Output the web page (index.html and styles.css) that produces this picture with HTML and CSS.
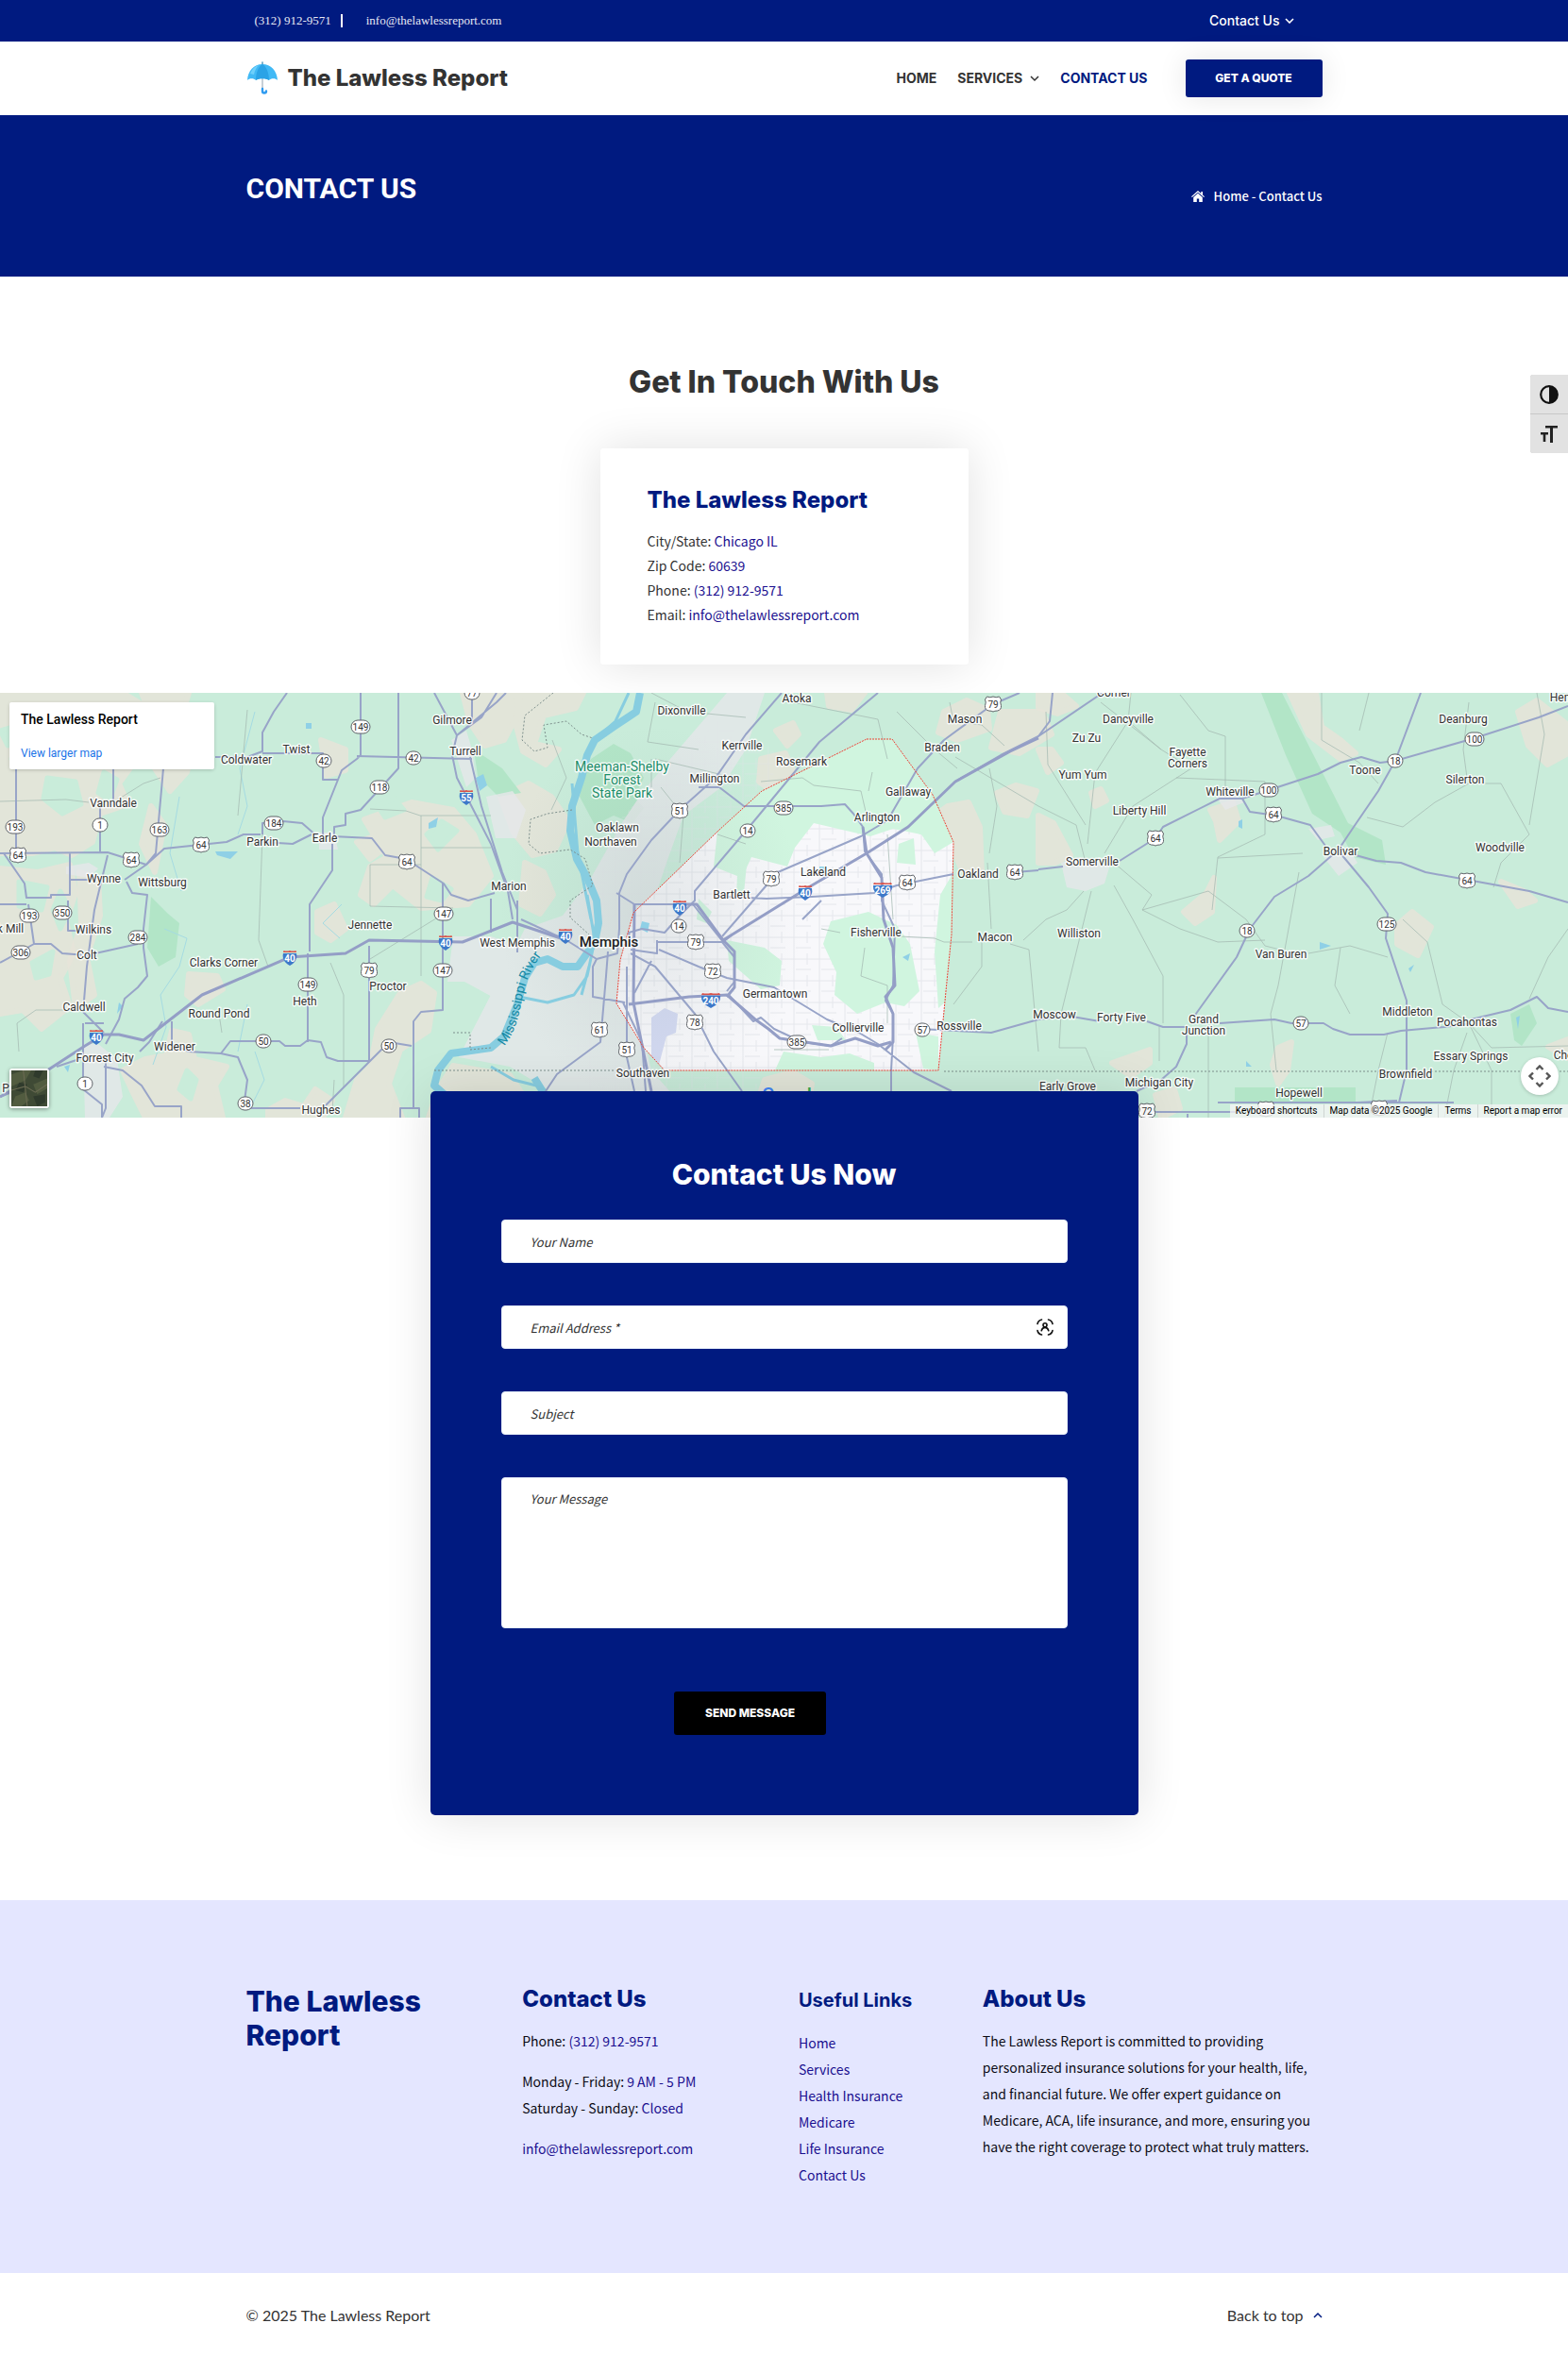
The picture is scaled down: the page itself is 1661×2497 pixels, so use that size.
FILE: index.html
```html
<!DOCTYPE html>
<html lang="en">
<head>
<meta charset="utf-8">
<meta name="viewport" content="width=device-width, initial-scale=1">
<title>Contact Us - The Lawless Report</title>
<link rel="stylesheet" href="styles.css">
</head>
<body>
<div class="topbar">
  <div class="container topbar-row">
    <div class="topbar-contact">
      <a class="topbar-phone" href="tel:3129129571">(312) 912-9571</a>
      <a href="mailto:info@thelawlessreport.com">info@thelawlessreport.com</a>
    </div>
    <button class="topbar-menu" type="button">Contact Us
      <svg width="10" height="6" viewBox="0 0 10 6" aria-hidden="true"><path d="M1 1l4 4 4-4" fill="none" stroke="currentColor" stroke-width="1.600"/></svg>
    </button>
  </div>
</div>

<header class="header">
  <div class="container header-row">
    <a class="brand" href="#">
      <svg class="brand-icon" width="34" height="36" viewBox="0 0 34 36" aria-hidden="true">
        <path d="M17 16v14" stroke="#b9c3cc" stroke-width="1.6"/>
        <path d="M17 29v2.500a2 2 0 0 0 4 0" fill="none" stroke="#2f9bf0" stroke-width="2.400" stroke-linecap="round"/>
        <path d="M17 1v3" stroke="#5d9fc0" stroke-width="1.600" stroke-linecap="round"/>
        <path d="M1 20C1.500 10 8 3 17 3s15.500 7 16 17c-2-2.500-7-2.500-9 0-3-2.500-11-2.500-14 0-2-2.500-7-2.500-9 0z" fill="#41b9f5"/>
        <path d="M10 20C10 12 13 5 17 3c4 2 7 9 7 17-3-2.500-11-2.500-14 0z" fill="#2ba3e6"/>
        <path d="M4 13C6 8 9 5 13 4c-2 2-4 5-5 10z" fill="#6fd0fb"/>
      </svg>
      <span>The Lawless Report</span>
    </a>
    <nav class="nav" aria-label="Main">
      <a href="#">HOME</a>
      <a href="#">SERVICES
        <svg width="10" height="8" viewBox="0 0 10 8" aria-hidden="true"><path d="M1 2l4 4 4-4" fill="none" stroke="currentColor" stroke-width="1.500"/></svg>
      </a>
      <a class="is-active" href="#">CONTACT US</a>
      <a class="btn btn-quote" href="#">GET A QUOTE</a>
    </nav>
  </div>
</header>

<section class="hero">
  <div class="container hero-row">
    <h1>CONTACT US</h1>
    <div class="crumbs">
      <svg width="14" height="12" viewBox="0 0 14 12" aria-hidden="true"><path d="M7 0L0 6.200l.8.900L7 1.700l6.200 5.400.8-.9-2-1.800V1h-1.700v1.900zM7 2.800L2.200 7v5h3.600V8.500h2.400V12h3.600V7z" fill="currentColor"/></svg>
      <span><a href="#">Home</a> - Contact Us</span>
    </div>
  </div>
</section>

<main>
  <section class="touch">
    <h2>Get In Touch With Us</h2>
    <div class="card">
      <h3>The Lawless Report</h3>
      <p>City/State: <span class="accent">Chicago IL</span></p>
      <p>Zip Code: <span class="accent">60639</span></p>
      <p>Phone: <a href="tel:3129129571">(312) 912-9571</a></p>
      <p>Email: <a href="mailto:info@thelawlessreport.com">info@thelawlessreport.com</a></p>
    </div>
  </section>

  <section class="map" aria-label="Map">
    <svg class="map-canvas" viewBox="0 0 1661 450" preserveAspectRatio="xMidYMid slice">
      <defs>
        <radialGradient id="focus"><stop offset="0" stop-color="#9aa" stop-opacity=".22"/><stop offset="1" stop-color="#9aa" stop-opacity="0"/></radialGradient>
        <pattern id="streets" width="27" height="23" patternUnits="userSpaceOnUse"><path d="M4 0v23M18 0v12M0 6h27M6 17h16" fill="none" stroke="#e0e2e8" stroke-width="1"/></pattern>
        <clipPath id="service"><path d="M918 49H945L988 108L1010 158L1008 256L1002 316L994 400H704L682 376L653 329L657 283L671 233L761 146L807 104Z"/></clipPath>
      </defs>
      <rect width="1661" height="450" class="land"/>

      <!-- farmland -->
      <g class="farm">
        <path d="M0 0h130l20 12-14 24 12 30-22 30 10 22-30 10-8 30-22 14-18-8-24 6-34 0z"/>
        <path d="M150 0h50l-6 20 14 24-10 40-18 20-16-24 2-40zM160 120l14 20-10 50-14-30zM0 186l40 4 34-8 6 30-10 30 8 34-14 26 10 30-30 24-20-20-24 4z"/>
        <path d="M84 190l20 6 2 40-14 44 8 40-20 14-6-50 12-40z"/>
        <path d="M130 400l24-12 22-4 6-26 18 4 6 26 34 8-12 20 8 34H154l-12-24zM200 298l30 2 6 14-26 16-12-10z"/>
        <path d="M386 134l50-18 44 8 22 26 18 44-24 30-50 4-30-24-20 20-14-10 10-30 18-10zM336 232l18-8 12 26-16 12-14-8zM340 50l26 10 0 22-20 6zM378 158l18-6 12 12-16 12zM424 318l22-10 14 10-6 40-30 20-12 36 14 36h-60l12-40 14-14 8-40zM284 442l18-10 20 6 12-18 18 12-10 18h-58z"/>
        <path d="M490 0h56l4 20-16 30-20 6-16-24zM530 110l30-14 24 14 18 26-14 30-24 6-20-24zM556 180l20 10 10 24-14 20-20-10zM552 0h66l-8 16-34 8-10 30 26 6-14 16-24-14-8-30zM480 395l60 10 20 30-20 15h-86l10-30z"/>
        <path d="M806 70l26-6 10 22-24 18-14-10zM822 40l18-8 6 12-12 12zM876 0h40l-14 18-24-4zM1000 20l24-12 22 10 2 20-34 12-20-8zM1060 20l44 0 10 24-34 20-30-6zM990 130l14-10 22-4 12 26 2 50-22-6-12-30zM1056 106l20-8 22 6-10 26-24-4zM800 440l10-30 30-8 20 12-6 36z"/>
        <path d="M1100 130l16 8 18 34-16 8-18 0zM1100 60h14l10 14-14 10zM1100 0h24l16 14-20 8-20-6zM1156 106l10-4 6 12-12 6zM1282 124l24-8 6 20-20 20-4-20zM1278 212l8-16-2 36-18 12-12-12zM1366 0h28l6 36 20 14 16 14-16 6-34-26zM1480 246l16-14 20 16-14 30-22-12zM1608 20l20-12 33 26v30l-22 12-20-20zM1590 200l24 10 12 10-18 6zM1354 376l14-6-4 30-10 14-6-20zM1178 392l40-14 0 14-20 14zM1224 426l20-6 6 20-20 10zM1640 375l21-8v20z"/>
      </g>
      <g class="wood">
        <path d="M0 40l20-6 6 14-18 8zM16 52l24 8-4 14-24-4zM50 90l30 4 6 24-20 10-20-16zM110 84l14 8-8 22-12-8zM20 200l30 6-6 24-24-4zM64 210l10 20-10 20-8-20zM34 286l22-12-4 24-14 4z"/>
        <path d="M452 150l16-14 16 10-20 20zM458 196l20 12-10 12-16-4zM400 120l18-8 10 12-20 8zM198 400l10 10-6 20-12-10z"/>
      </g>
      <g class="forest">
        <path d="M160 216l18 18 12 10-4 36-18 10-12-20zM502 60l30 20 20 26-24 4-22-22zM626 70l24-16 18 10 14 26-10 20 10 12-12 16-20-8-20 10-16-30 4-30z"/>
        <path d="M1336 0h22l70 138 36 18 4 26-34-8-14-26-30-20-28-62zM1600 340l20-10 8 20-16 24-8-6zM1308 418h128v16H1308z"/>
      </g>
      <g class="town">
        <path d="M478 50l16-10 6 20 4 30-10 10zM515 110l28-6 14 20-10 30-22 0zM556 250l40-14 30-40 34-60 20-30 30-36 60-70 40 0-20 60-26 40-40 30-18 50-20 60-14 40 4 60 14 60 30 34 0 30-80 12-50-50-50-30-54-10zM480 258l40 0 36 12 14 30-34 30-44-24-18 0zM88 372l16 0 20 16 6 40-14 22H90zM1124 180l18-6 34 8-6 20-20 8-20-4zM1288 110l20-4 10 10-20 8zM1386 144l24-4 4 12-18 4zM1402 174l30-4 6 10-20 14zM70 184l24-4 10 6-10 10-24-4zM338 148l16 0 4 18-20 0z"/>
      </g>
      <path class="streets-fill" d="M600 250l60-120 100-100 60 30-10 360H600z"/>

      <!-- service area -->
      <g clip-path="url(#service)">
        <rect x="640" y="30" width="380" height="390" class="service-land"/>
        <rect x="640" y="30" width="380" height="390" fill="url(#streets)" opacity=".8"/>
        <path class="park" d="M760 146l48-44 110-60h28l44 66 20 50-20 12-14-20-30-6-24 8-60-14-20 26-8 20-38-10-10 22-30-12z"/>
        <path class="park" d="M782 170l10 2-4 40-8 4zM740 218l14 14-6 12-10-4zM770 262l40 8 18 14-2 26-20 4-34-30zM880 242l40-10 30 14 14 20 10 50-16 16-20-4-30 12-24-20 2-24-14-30zM952 160l16-6 2 28-20-2zM974 130l20 14-8 10-16-6zM1010 190v130l-16 14-4-60 6-60zM970 360l24 4 0 36-16-2zM830 380l40 6 30-4 26 10 0 10H820zM860 352l26 2 10 14-30 0z"/>
        <path class="basin" d="M690 344l14-10 14 6-2 20-10 4-8 30-8-6z"/>
      </g>
      <ellipse cx="690" cy="235" rx="160" ry="200" fill="url(#focus)"/>

      <!-- water -->
      <g class="river">
        <path d="M678 0L674 20L650 36L630 50L622 66L616 90L606 120L604 146L611 176L622 196L632 220L634 244L630 264L612 290L596 290L580 282L566 286L556 302L548 330L534 364L520 376L478 382L464 400L460 416L476 430L508 434L536 438L550 430L566 434L576 424L566 408"/>
        <path class="creek" d="M666 0L652 30L634 46M606 96L612 170L626 240M622 214L630 262L622 300L608 320L580 328L550 322M520 396L544 410L568 416M624 290L616 320"/>
        <path class="brook" d="M174 250l24 10-8 30-20 30 6 34-14 40M270 20l-16 60 8 40-10 30M190 110l-10 60 12 40M270 380l10 30-12 24M262 330l-10 50M360 260l-18-16 20-20"/>
        <path class="pond" d="M680 242l8 2-2 10-8-4zM868 184l8 0-2 6-6 0zM956 280l8-4-2 8zM504 90l8-4 4 12-8 6zM454 138l10-6-2 10-8 2zM1312 136l4-2 0 10-4-2zM324 32h6v6h-6zM228 168l24 0-8 8-14-4zM1606 344l4-2-2 14zM68 396l6-2-2 8zM126 328l4 4-6 8zM1398 264l12 4-12 4zM1492 292l6-4-4 8zM1320 390l6 6-6 0z"/>
      </g>

      <!-- county lines and small roads -->
      <g class="lane">
        <path d="M0 115L70 113L94 116M120 116L152 96L170 90M278 150L274 262L284 290M235 360L232 340M446 130V300M392 123L430 125L445 130H520M392 182H446M392 182V226L480 228M446 164H520M392 282L470 234M350 286L364 320V418M354 410L352 445M20 380L18 350L38 336H70M262 18L252 130"/>
        <path d="M694 10L686 52L740 60M694 70L770 88M806 94L850 90L862 98L912 104L918 130M920 104L924 84M1006 10L1010 30L1040 34L1064 56M1012 68L1100 120L1140 140L1150 180M950 20L990 60L1014 80M1048 80L1056 120L1048 170M954 258L990 260L1000 264L1030 264M1070 266L1090 272L1100 380M1084 262L1108 240L1130 230L1148 210M1010 330L1040 290V264M1046 180L1050 250M890 254L870 250M916 270L912 300L940 310V350M820 378H878M940 150L946 240M690 70V100M760 150L790 160"/>
        <path d="M1198 0L1195 30L1160 85L1152 160M1250 2L1280 40L1298 46V110M1195 30L1230 60L1262 80L1200 120L1170 170M1166 10L1230 60M1108 20L1110 76L1150 140M1180 180L1220 214L1210 230L1250 250L1290 264L1340 262M1210 230L1280 210L1320 240L1340 268L1356 272M1246 90L1340 94V150L1290 174L1284 230M1290 175L1380 170M1376 190L1354 310L1346 340L1352 400M1386 276L1430 268L1470 280M1486 240L1512 264L1528 330L1556 350L1580 376L1661 374M1448 132L1486 142L1520 116L1556 96M1556 10L1550 60L1554 90M1536 96L1590 96L1620 150L1590 180L1582 206M1628 0L1636 44L1620 140M1400 0V50L1440 74L1460 96M1440 40L1450 0M1156 210L1124 340L1122 376H1150L1160 400M1228 352V390M1280 360V450M1180 204L1200 240L1232 300V350M1420 270L1414 310L1430 340M1661 250L1640 280L1620 324M1554 360L1540 400L1530 450M1470 360L1460 400L1450 450M1556 350L1580 400V450"/>
        <path d="M585 50L600 90L584 124M690 0L728 20L790 26M840 10L930 28L940 70M700 100L724 130L720 180"/>
      </g>

      <!-- highways -->
      <g class="road">
        <path d="M304 0L290 20L278 42V62L262 68H228M278 64H342V92H358L342 132V152M382 0V66L378 70L362 82L358 92M378 67L500 70M422 0V80L382 124L366 128V140L354 142V154M460 0L484 45L526 10L536 0M526 0L510 26L484 45L479 66L484 90L520 160L538 210L543 240M500 30V0M498 68L510 120L532 190L548 230V275"/>
        <path d="M17 80V170M120 80V120M106 120V168M173 80L165 170L155 182L132 198M0 170L114 169L155 182L174 165L240 158L258 150H276M278 150V138L300 136L320 138L336 152M278 158L310 160L330 150M352 152L394 154L408 172L430 176L470 202L478 214L496 220L524 212M74 170V198H94M74 198V214H54V217H28L26 202L4 170M0 224H28M30 224L36 266H54L66 276L92 278L146 266M36 266L18 276L0 286M72 220V252H90M114 172L100 230L92 290L88 338M134 200L140 212L156 214L152 250V270L156 300L146 312L132 324L126 346L112 372M352 160V188L328 224V274M326 276V370M391 268V390M469 202V336L446 338L438 348V440M60 396L90 386M0 428L50 408"/>
        <path d="M90 350H110M88 338L110 360M88 350V420L108 436V450M112 390V440L108 450M110 396L130 400L150 416L164 438H192V450M148 380L158 370L172 348M182 348V372L200 380L234 382L244 369H296L302 374L318 374L326 368L340 370L346 386L358 390H392L412 370L436 374M234 382L252 386L262 410L258 440H318M342 440L392 390M424 450V440H444V450M520 218V254M548 220V270"/>
        <path d="M828 0L790 44L758 90L720 124L690 156L664 192L656 212V250L654 276L632 282L628 290V322L662 328M930 0L868 52L840 86L792 144L736 210V220L720 236L704 254L680 250L666 254L668 264M740 100H762L788 120H870L895 118L904 128L914 142L916 168L934 192V220L948 250L946 310L938 326L946 340V364L944 400V422M942 134L912 152L824 190L765 258M696 264H765L778 280V306L770 316M770 216L812 218L860 216L926 212L950 204L1010 192M1100 188L1075 190M668 276L694 290L736 340L756 380L786 422M668 272L696 276V262M698 272L740 290L770 302L820 312L876 346L910 360L930 372L968 402L1008 422M552 240L600 262L632 282M644 274L642 300L636 370L590 404L578 422M664 290V386L672 422M672 318L690 284M660 328L680 370L684 422M653 212L672 224H734L766 264L776 256M870 220L850 240M892 366L880 374L850 370L820 356L806 344L798 348L772 320"/>
        <path d="M1000 50L1052 12L1080 0M942 132L972 80L1000 50M974 356L1050 360L1100 346L1130 342L1165 348M1215 348L1232 354H1256M1100 46L1168 0M1115 0L1112 30L1100 46L1060 66L1012 94M1292 350L1350 346L1368 350H1402L1412 356L1430 362H1466L1484 358L1530 354L1558 350M1558 346L1600 336L1628 322L1640 334L1661 338M1257 356V372L1246 396L1230 410L1204 422M1220 444H1310M1438 434L1480 432M1258 446V450M1290 434H1540"/>
        <path d="M1100 187L1126 184M1186 178L1224 154L1232 142L1292 112H1316L1324 126L1352 130L1388 140L1404 162M1316 112L1344 103L1396 86L1420 74L1442 68L1462 74L1478 72L1562 48L1630 26L1661 14M1505 0L1478 72L1460 104L1434 142L1418 166L1386 194L1350 216L1324 250L1310 280L1264 344M1420 170L1450 206L1470 234L1468 260L1490 326V400L1482 434M1436 172L1458 178L1484 180L1510 190L1554 198L1620 210L1661 222"/>
      </g>
      <g class="freeway">
        <path d="M0 428L50 400L90 374L110 362H126L152 368L214 320L307 280L366 276L391 262L490 264L543 243L600 262"/>
        <path d="M672 224L671 328L690 422M666 330L730 322L770 320L800 346L814 356L826 366L880 374L906 366L930 374L944 370M716 224H738L766 262L860 204L918 170L962 142L1012 94L1070 62L1100 48"/>
        <path d="M766 262L778 274V312L770 322M914 142L918 170L934 196L936 240L946 270L948 310L938 322L946 340V370L938 378"/>
      </g>

      <!-- state and service borders -->
      <path class="state" d="M460 400H704M1000 401H1661M586 0L556 24L553 50L566 62L580 58L576 34L600 30L616 44L628 48M606 124L580 128L562 134L560 160L572 170L604 166L620 176L628 204L604 220L604 238L624 256M480 360H498V378L520 376"/>
      <path class="boundary" d="M918 49H945L988 108L1010 158L1008 256L1002 316L994 400H704L682 376L653 329L657 283L671 233L761 146L807 104Z"/>

      <g class="label">
        <text x="479" y="33">Gilmore</text><text x="493" y="66">Turrell</text><text x="314" y="64">Twist</text><text x="261" y="75">Coldwater</text><text x="120" y="121">Vanndale</text><text x="278" y="162">Parkin</text><text x="344" y="158">Earle</text><text x="110" y="201">Wynne</text><text x="172" y="205">Wittsburg</text><text x="539" y="209">Marion</text><text x="11" y="254">k Mill</text><text x="99" y="255">Wilkins</text><text x="392" y="250">Jennette</text><text x="548" y="269">West Memphis</text><text x="92" y="282">Colt</text><text x="237" y="290">Clarks Corner</text><text x="411" y="315">Proctor</text><text x="323" y="331">Heth</text><text x="89" y="337">Caldwell</text><text x="232" y="344">Round Pond</text><text x="185" y="379">Widener</text><text x="111" y="391">Forrest City</text><text x="6" y="423">P</text><text x="340" y="446">Hughes</text>
        <text x="844" y="10">Atoka</text><text x="722" y="23">Dixonville</text><text x="1022" y="32">Mason</text><text x="786" y="60">Kerrville</text><text x="998" y="62">Braden</text><text x="849" y="77">Rosemark</text><text x="757" y="95">Millington</text><text x="962" y="109">Gallaway</text><text x="929" y="136">Arlington</text><text x="654" y="147">Oaklawn</text><text x="647" y="162">Northaven</text><text x="872" y="194">Lakeland</text><text x="1036" y="196">Oakland</text><text x="775" y="218">Bartlett</text><text x="928" y="258">Fisherville</text><text x="1054" y="263">Macon</text><text x="821" y="323">Germantown</text><text x="909" y="359">Collierville</text><text x="1016" y="357">Rossville</text><text x="681" y="407">Southaven</text><text x="1117" y="345">Moscow</text><text x="1131" y="421">Early Grove</text>
        <text x="1180" y="4">Corner</text><text x="1671" y="9">Henderson</text><text x="1195" y="32">Dancyville</text><text x="1151" y="52">Zu Zu</text><text x="1258" y="67">Fayette</text><text x="1258" y="79">Corners</text><text x="1550" y="32">Deanburg</text><text x="1147" y="91">Yum Yum</text><text x="1446" y="86">Toone</text><text x="1552" y="96">Silerton</text><text x="1303" y="109">Whiteville</text><text x="1207" y="129">Liberty Hill</text><text x="1420" y="172">Bolivar</text><text x="1589" y="168">Woodville</text><text x="1157" y="183">Somerville</text><text x="1143" y="259">Williston</text><text x="1357" y="281">Van Buren</text><text x="1491" y="342">Middleton</text><text x="1554" y="353">Pocahontas</text><text x="1188" y="348">Forty Five</text><text x="1275" y="350">Grand</text><text x="1275" y="362">Junction</text><text x="1558" y="389">Essary Springs</text><text x="1670" y="388">Chewalla</text><text x="1489" y="408">Brownfield</text><text x="1228" y="417">Michigan City</text><text x="1376" y="428">Hopewell</text>
        <text class="label-city" x="645" y="269">Memphis</text>
        <g class="label-park"><text x="659" y="83">Meeman-Shelby</text><text x="659" y="97">Forest</text><text x="659" y="111">State Park</text></g>
      </g>
      <path id="river-line" d="M534 374C546 360 550 340 553 325S560 294 578 272" fill="none"/>
      <text class="label-river"><textPath href="#river-line">Mississippi River</textPath></text>

      <!-- state routes -->
      <g class="route">
        <g transform="translate(382 36)"><rect x="-10" y="-7" width="20" height="14" rx="7"/><text y="4">149</text></g>
        <g transform="translate(343 72)"><rect x="-8" y="-7" width="16" height="14" rx="7"/><text y="4">42</text></g>
        <g transform="translate(438 69)"><rect x="-8" y="-7" width="16" height="14" rx="7"/><text y="4">42</text></g>
        <g transform="translate(402 100)"><rect x="-10" y="-7" width="20" height="14" rx="7"/><text y="4">118</text></g>
        <g transform="translate(16 142)"><rect x="-10" y="-7" width="20" height="14" rx="7"/><text y="4">193</text></g>
        <g transform="translate(106 140)"><rect x="-8" y="-7" width="16" height="14" rx="7"/><text y="4">1</text></g>
        <g transform="translate(290 138)"><rect x="-10" y="-7" width="20" height="14" rx="7"/><text y="4">184</text></g>
        <g transform="translate(169 145)"><rect x="-10" y="-7" width="20" height="14" rx="7"/><text y="4">163</text></g>
        <g transform="translate(66 233)"><rect x="-10" y="-7" width="20" height="14" rx="7"/><text y="4">350</text></g>
        <g transform="translate(31 236)"><rect x="-10" y="-7" width="20" height="14" rx="7"/><text y="4">193</text></g>
        <g transform="translate(146 259)"><rect x="-10" y="-7" width="20" height="14" rx="7"/><text y="4">284</text></g>
        <g transform="translate(22 275)"><rect x="-10" y="-7" width="20" height="14" rx="7"/><text y="4">306</text></g>
        <g transform="translate(470 234)"><rect x="-10" y="-7" width="20" height="14" rx="7"/><text y="4">147</text></g>
        <g transform="translate(469 294)"><rect x="-10" y="-7" width="20" height="14" rx="7"/><text y="4">147</text></g>
        <g transform="translate(326 309)"><rect x="-10" y="-7" width="20" height="14" rx="7"/><text y="4">149</text></g>
        <g transform="translate(279 369)"><rect x="-8" y="-7" width="16" height="14" rx="7"/><text y="4">50</text></g>
        <g transform="translate(412 374)"><rect x="-8" y="-7" width="16" height="14" rx="7"/><text y="4">50</text></g>
        <g transform="translate(90 414)"><rect x="-8" y="-7" width="16" height="14" rx="7"/><text y="4">1</text></g>
        <g transform="translate(260 435)"><rect x="-8" y="-7" width="16" height="14" rx="7"/><text y="4">38</text></g>
        <g transform="translate(500 0)"><rect x="-8" y="-7" width="16" height="14" rx="7"/><text y="4">77</text></g>
        <g transform="translate(830 122)"><rect x="-10" y="-7" width="20" height="14" rx="7"/><text y="4">385</text></g>
        <g transform="translate(792 146)"><rect x="-8" y="-7" width="16" height="14" rx="7"/><text y="4">14</text></g>
        <g transform="translate(719 247)"><rect x="-8" y="-7" width="16" height="14" rx="7"/><text y="4">14</text></g>
        <g transform="translate(844 370)"><rect x="-10" y="-7" width="20" height="14" rx="7"/><text y="4">385</text></g>
        <g transform="translate(977 357)"><rect x="-8" y="-7" width="16" height="14" rx="7"/><text y="4">57</text></g>
        <g transform="translate(1562 49)"><rect x="-10" y="-7" width="20" height="14" rx="7"/><text y="4">100</text></g>
        <g transform="translate(1478 72)"><rect x="-8" y="-7" width="16" height="14" rx="7"/><text y="4">18</text></g>
        <g transform="translate(1344 103)"><rect x="-10" y="-7" width="20" height="14" rx="7"/><text y="4">100</text></g>
        <g transform="translate(1321 252)"><rect x="-8" y="-7" width="16" height="14" rx="7"/><text y="4">18</text></g>
        <g transform="translate(1469 245)"><rect x="-10" y="-7" width="20" height="14" rx="7"/><text y="4">125</text></g>
        <g transform="translate(1378 350)"><rect x="-8" y="-7" width="16" height="14" rx="7"/><text y="4">57</text></g>
      </g>

      <!-- US routes -->
      <defs><path id="us" d="M-6.500-8Q-3-6.500 0-8 3-6.500 6.500-8L8.500-5Q7-2 8.500 1.500 9 6 4.500 7 1.500 7 0 8-1.500 7-4.500 7-9 6-8.500 1.500-7-2-8.500-5Z"/>
        <g id="interstate"><path d="M-7-4H7Q9 4 0 9-9 4-7-4Z" fill="#3d78c9"/><path d="M-6.500-7Q-3-6 0-7 3-6 6.500-7L7-5H-7Z" fill="#d9534b"/></g>
        <g id="interstate-wide"><path d="M-10-4H10Q11 4 0 9-11 4-10-4Z" fill="#3d78c9"/><path d="M-9-7Q-5-6 0-7 5-6 9-7L10-5H-10Z" fill="#d9534b"/></g></defs>
      <g class="route">
        <g transform="translate(19 172)"><use href="#us"/><text y="4">64</text></g>
        <g transform="translate(139 177)"><use href="#us"/><text y="4">64</text></g>
        <g transform="translate(213 161)"><use href="#us"/><text y="4">64</text></g>
        <g transform="translate(431 179)"><use href="#us"/><text y="4">64</text></g>
        <g transform="translate(391 294)"><use href="#us"/><text y="4">79</text></g>
        <g transform="translate(1052 12)"><use href="#us"/><text y="4">79</text></g>
        <g transform="translate(720 125)"><use href="#us"/><text y="4">51</text></g>
        <g transform="translate(817 197)"><use href="#us"/><text y="4">79</text></g>
        <g transform="translate(961 201)"><use href="#us"/><text y="4">64</text></g>
        <g transform="translate(1075 190)"><use href="#us"/><text y="4">64</text></g>
        <g transform="translate(737 264)"><use href="#us"/><text y="4">79</text></g>
        <g transform="translate(755 295)"><use href="#us"/><text y="4">72</text></g>
        <g transform="translate(736 349)"><use href="#us"/><text y="4">78</text></g>
        <g transform="translate(635 357)"><use href="#us"/><text y="4">61</text></g>
        <g transform="translate(664 378)"><use href="#us"/><text y="4">51</text></g>
        <g transform="translate(1349 129)"><use href="#us"/><text y="4">64</text></g>
        <g transform="translate(1224 154)"><use href="#us"/><text y="4">64</text></g>
        <g transform="translate(1554 199)"><use href="#us"/><text y="4">64</text></g>
        <g transform="translate(1215 443)"><use href="#us"/><text y="4">72</text></g>
        <use href="#us" x="1341" y="441"/><use href="#us" x="1461" y="440"/>
      </g>
      <g class="interstate">
        <g transform="translate(494 110)"><use href="#interstate"/><text y="5">55</text></g>
        <g transform="translate(307 280)"><use href="#interstate"/><text y="5">40</text></g>
        <g transform="translate(472 264)"><use href="#interstate"/><text y="5">40</text></g>
        <g transform="translate(102 364)"><use href="#interstate"/><text y="5">40</text></g>
        <g transform="translate(720 227)"><use href="#interstate"/><text y="5">40</text></g>
        <g transform="translate(853 211)"><use href="#interstate"/><text y="5">40</text></g>
        <g transform="translate(599 257)"><use href="#interstate"/><text y="5">40</text></g>
        <g transform="translate(935 208)"><use href="#interstate-wide"/><text y="5">269</text></g>
        <g transform="translate(753 325)"><use href="#interstate-wide"/><text y="5">240</text></g>
      </g>
      <text class="google" x="807" y="433"><tspan fill="#4285f4">G</tspan><tspan fill="#ea4335">o</tspan><tspan fill="#fbbc04">o</tspan><tspan fill="#4285f4">g</tspan><tspan fill="#34a853">l</tspan><tspan fill="#ea4335">e</tspan></text>
    </svg>

    <div class="map-info">
      <strong>The Lawless Report</strong>
      <a href="#">View larger map</a>
    </div>
    <button class="map-layer" type="button" aria-label="Show satellite imagery">
      <svg viewBox="0 0 36 36" aria-hidden="true"><rect width="36" height="36" fill="#3f4a35"/><path d="M0 4l12-4h8l-6 10-14 6zM22 14l14-6v10l-10 6zM4 26l10-4 4 8-8 6H0z" fill="#525c40"/><path d="M8 12l8 2-4 8-8-2zM24 0h8l-4 8-6-2zM22 26l12-2v8l-8 4z" fill="#2f3a2c"/><path d="M0 20l14-4 10 6 12-8M12 0l4 36" fill="none" stroke="#6a6a52"/></svg>
    </button>
    <button class="map-camera" type="button" aria-label="Map camera controls">
      <svg width="24" height="24" viewBox="0 0 24 24" aria-hidden="true"><path d="M8.500 5L12 1.500 15.500 5M8.500 19l3.500 3.500 3.500-3.500M5 8.500L1.500 12 5 15.500M19 8.500l3.500 3.500-3.500 3.500" fill="none" stroke="#555" stroke-width="2.400"/></svg>
    </button>
    <div class="map-legal">
      <button type="button">Keyboard shortcuts</button>
      <span>Map data ©2025 Google</span>
      <a href="#">Terms</a>
      <a href="#">Report a map error</a>
    </div>
  </section>

  <form class="contact" action="#">
    <h2>Contact Us Now</h2>
    <input type="text" placeholder="Your Name" aria-label="Your Name">
    <div class="field">
      <input type="email" placeholder="Email Address *" aria-label="Email Address">
      <svg class="field-icon" width="18" height="18" viewBox="0 0 18 18" aria-hidden="true"><g fill="none" stroke="#111" stroke-width="1.600" stroke-linecap="round"><path d="M1 5.500C1.500 3 3 1.500 5.500 1M12.500 1C15 1.500 16.500 3 17 5.500M17 12.500c-.5 2.500-2 4-4.500 4.500M5.500 17C3 16.500 1.500 15 1 12.500"/><circle cx="9" cy="6.800" r="2"/><path d="M5.200 12.800c.6-2.400 2-3.400 3.800-3.400s3.200 1 3.800 3.400"/></g></svg>
    </div>
    <input type="text" placeholder="Subject" aria-label="Subject">
    <textarea placeholder="Your Message" aria-label="Your Message"></textarea>
    <button class="btn btn-send" type="submit">SEND MESSAGE</button>
  </form>
</main>

<footer class="footer">
  <div class="container footer-grid">
    <h2>The Lawless Report</h2>
    <div>
      <h3>Contact Us</h3>
      <p>Phone: <a href="tel:3129129571">(312) 912-9571</a></p>
      <p>Monday - Friday: <span class="accent">9 AM - 5 PM</span><br>Saturday - Sunday: <span class="accent">Closed</span></p>
      <p><a href="mailto:info@thelawlessreport.com">info@thelawlessreport.com</a></p>
    </div>
    <div>
      <h4>Useful Links</h4>
      <ul>
        <li><a href="#">Home</a></li>
        <li><a href="#">Services</a></li>
        <li><a href="#">Health Insurance</a></li>
        <li><a href="#">Medicare</a></li>
        <li><a href="#">Life Insurance</a></li>
        <li><a href="#">Contact Us</a></li>
      </ul>
    </div>
    <div>
      <h3>About Us</h3>
      <p>The Lawless Report is committed to providing personalized insurance solutions for your health, life, and financial future. We offer expert guidance on Medicare, ACA, life insurance, and more, ensuring you have the right coverage to protect what truly matters.</p>
    </div>
  </div>
</footer>
<div class="legal">
  <div class="container legal-row">
    <span>© 2025 The Lawless Report</span>
    <a href="#">Back to top
      <svg width="10" height="8" viewBox="0 0 10 8" aria-hidden="true"><path d="M1 6l4-4 4 4" fill="none" stroke="#001a80" stroke-width="1.500"/></svg>
    </a>
  </div>
</div>

<div class="a11y">
  <button type="button" aria-label="Toggle high contrast"><svg width="20" height="20" viewBox="0 0 20 20" aria-hidden="true"><circle cx="10" cy="10" r="8.800" fill="none" stroke="#111" stroke-width="2.200"/><path d="M10 1a9 9 0 0 1 0 18z" fill="#111"/></svg></button>
  <button type="button" aria-label="Toggle font size"><svg width="18" height="18" viewBox="0 0 18 18" aria-hidden="true"><path d="M5 0h13v2.600h-5V18h-3V2.600H5zM0 7h8v2.500H5.300V17H2.700V9.500H0z" fill="#222"/></svg></button>
</div>
</body>
</html>
```
FILE: styles.css
```css
:root {
  --navy: #001a80;
  --link: #1a0f8f;
  --ink: #333;
  --head: Inter, "Open Sans", sans-serif;
  --body: "Noto Sans CJK SC", "Noto Sans", sans-serif;
}

* { box-sizing: border-box; }

body {
  margin: 0;
  background: #fff;
  color: var(--ink);
  font: 14px/26px var(--body);
}

h1, h2, h3, h4, p, ul { margin: 0; padding: 0; }
ul { list-style: none; }
a { color: inherit; text-decoration: none; }
button { border: 0; background: none; padding: 0; color: inherit; font: inherit; cursor: pointer; }
h2, h3, h4 { font-family: var(--head); font-weight: 800; }

.container { width: 100%; max-width: 1140px; margin: 0 auto; }
.accent, .card a, .footer a { color: var(--link); }

.topbar { background: var(--navy); color: #fff; }
.topbar-row { display: flex; justify-content: space-between; align-items: center; height: 44px; padding: 0 30px 0 9px; }
.topbar-contact { display: flex; align-items: center; gap: 25px; font: 13px/14px "Liberation Serif", serif; color: #e6e8f4; }
.topbar-phone { padding-right: 10px; border-right: 2px solid #fff; }
.topbar-menu { display: flex; align-items: center; gap: 5px; font: 500 14px/20px var(--head); }

.header { background: #fff; }
.header-row { display: flex; justify-content: space-between; align-items: center; height: 78px; }
.brand { display: flex; align-items: center; gap: 10px; font: 800 24px/32px var(--head); }
.nav { display: flex; align-items: center; gap: 22px; font: 700 14px/20px var(--head); }
.nav a { display: flex; align-items: center; gap: 8px; }
.nav .is-active { color: var(--navy); }

.btn { display: flex; align-items: center; justify-content: center; border-radius: 3px; color: #fff; font: 800 12px/20px var(--head); }
.nav .btn-quote { width: 145px; height: 40px; margin-left: 18px; justify-content: center; background: var(--navy); box-shadow: 0 0 30px rgba(0, 0, 0, .1); }

.hero { background: var(--navy); color: #fff; }
.hero-row { display: flex; justify-content: space-between; align-items: center; height: 171px; padding-bottom: 16px; }
.hero h1 { font: 700 30px/40px Roboto, sans-serif; }
.crumbs { display: flex; align-items: center; gap: 10px; padding-top: 16px; font-size: 13px; font-weight: 500; }

.touch { display: flex; flex-direction: column; align-items: center; padding: 88px 0 30px; }
.touch h2 { font-size: 32px; line-height: 48px; }
.card { width: 390px; margin-top: 46px; padding: 36px 50px 40px; border-radius: 3px; background: #fff; box-shadow: 0 0 50px rgba(0, 0, 0, .12); }
.card h3 { margin-bottom: 12px; color: var(--navy); font-size: 24px; line-height: 37px; }

.map { position: relative; height: 450px; overflow: hidden; font-family: Roboto, sans-serif; }
.map-canvas { display: block; width: 100%; height: 100%; }
.land { fill: #c9ecda; }
.farm path { fill: #e7e4d9; stroke: #e7e4d9; stroke-width: 6; stroke-linejoin: round; opacity: .85; }
.wood path { fill: #c9ecda; stroke: #c9ecda; stroke-width: 5; stroke-linejoin: round; }
.forest path { fill: #b2e5c7; }
.town path { fill: #e6e7ea; opacity: .8; }
.streets-fill { fill: url(#streets); opacity: .4; }
.service-land { fill: #f8f8fb; }
.park { fill: #d0f5df; }
.basin { fill: #d3d9f2; }
.river path { fill: none; stroke: #87cde0; stroke-width: 8; stroke-linejoin: round; }
.river .creek { stroke-width: 3; }
.river .brook { stroke: #a5dbe2; stroke-width: 1; }
.river .pond { stroke: none; fill: #8fd0e6; }
.lane path { fill: none; stroke: #a4b9b1; stroke-width: 1; stroke-linejoin: round; opacity: .75; }
.road path { fill: none; stroke: #98a4c8; stroke-width: 2; stroke-linejoin: round; }
.freeway path { fill: none; stroke: #949ec6; stroke-width: 3; stroke-linejoin: round; }
.state { fill: none; stroke: #7d8f8c; stroke-width: 1; stroke-dasharray: 2 2; }
.boundary { fill: none; stroke: #ea4335; stroke-width: 1; stroke-dasharray: 2 1; }
.label { font-size: 12px; text-anchor: middle; fill: #333; }
.label text { paint-order: stroke; stroke: #fff; stroke-opacity: .8; stroke-width: 3px; stroke-linejoin: round; }
.label .label-city { font-size: 15px; font-weight: 500; fill: #222; }
.label-park { font-size: 14px; fill: #1e8e6a; }
.label-river { font-size: 14px; fill: #1689a5; }
.route rect, .route use { fill: #fff; stroke: #5f6368; stroke-width: 1; }
.route text { font-size: 10px; text-anchor: middle; fill: #333; }
.route text, .interstate text { font-family: Roboto, sans-serif; }
.interstate text { font-size: 10px; font-weight: 700; text-anchor: middle; fill: #fff; }
.google { font-size: 20px; font-weight: 500; }

.map-info { position: absolute; top: 10px; left: 10px; display: flex; flex-direction: column; justify-content: space-between; width: 217px; height: 71px; padding: 9px 12px; border-radius: 2px; background: #fff; box-shadow: 0 1px 4px -1px rgba(0, 0, 0, .3); }
.map-info strong { font-size: 14px; font-weight: 500; line-height: 18px; color: #000; }
.map-info a { font-size: 12px; line-height: 16px; color: #1a73e8; }
.map-layer { position: absolute; left: 10px; bottom: 10px; width: 42px; height: 42px; border: 2px solid #fff; border-radius: 3px; box-shadow: 0 1px 4px rgba(0, 0, 0, .4); }
.map-layer svg { display: block; width: 100%; height: 100%; }
.map-camera { position: absolute; right: 10px; bottom: 24px; display: flex; align-items: center; justify-content: center; width: 40px; height: 40px; border-radius: 50%; background: #fff; box-shadow: 0 1px 4px -1px rgba(0, 0, 0, .3); }
.map-legal { position: absolute; right: 0; bottom: 0; display: flex; height: 14px; background: rgba(245, 245, 245, .75); color: #000; font-size: 10px; line-height: 14px; }
.map-legal > * { padding: 0 6px; border-right: 1px solid rgba(0, 0, 0, .12); }
.map-legal > :last-child { border-right: 0; }

.contact { position: relative; display: flex; flex-direction: column; gap: 45px; width: 750px; max-width: 100%; margin: -28px auto 90px; padding: 64px 75px 85px; border-radius: 5px; background: var(--navy); box-shadow: 0 0 50px rgba(0, 0, 0, .12); }
.contact h2 { margin-bottom: -21px; color: #fff; font-size: 30px; line-height: 48px; text-align: center; }
.contact input, .contact textarea { display: block; width: 100%; height: 46px; padding: 0 30px; border: 1px solid #e4ecf8; border-radius: 4px; background: #fff; color: var(--ink); font: italic 13px/24px var(--body); outline: 0; }
.contact textarea { height: 160px; padding-top: 10px; resize: none; }
.contact ::placeholder { color: #333; opacity: 1; }
.field { position: relative; }
.field-icon { position: absolute; top: 14px; right: 15px; }
.btn-send { align-self: center; width: 161px; height: 46px; margin: 22px 72px 0 0; background: #000; }

.footer { padding: 89px 0 90px; background: #e4e6ff; color: #0b0b14; line-height: 28px; }
.footer-grid { display: grid; grid-template-columns: 263fr 263fr 165fr 360fr; gap: 30px; }
.footer h2, .footer h3, .footer h4 { color: var(--navy); }
.footer h2 { padding-right: 60px; font-size: 30px; line-height: 36px; }
.footer h3 { margin-bottom: 14px; font-size: 24px; line-height: 32px; }
.footer h4 { margin-bottom: 14px; font-size: 20px; font-weight: 700; line-height: 34px; }
.footer p { margin-bottom: 15px; }

.legal { background: #fff; font: 16px/26px Lato, sans-serif; }
.legal-row { display: flex; justify-content: space-between; align-items: center; height: 89px; }
.legal a { display: flex; align-items: center; gap: 10px; }

.a11y { position: absolute; top: 397px; right: 0; display: grid; gap: 1px; width: 40px; overflow: hidden; border-radius: 3px 0 0 3px; background: #c8c8c8; }
.a11y button { display: flex; align-items: center; justify-content: center; height: 41px; background: #e2e2e2; }
```
